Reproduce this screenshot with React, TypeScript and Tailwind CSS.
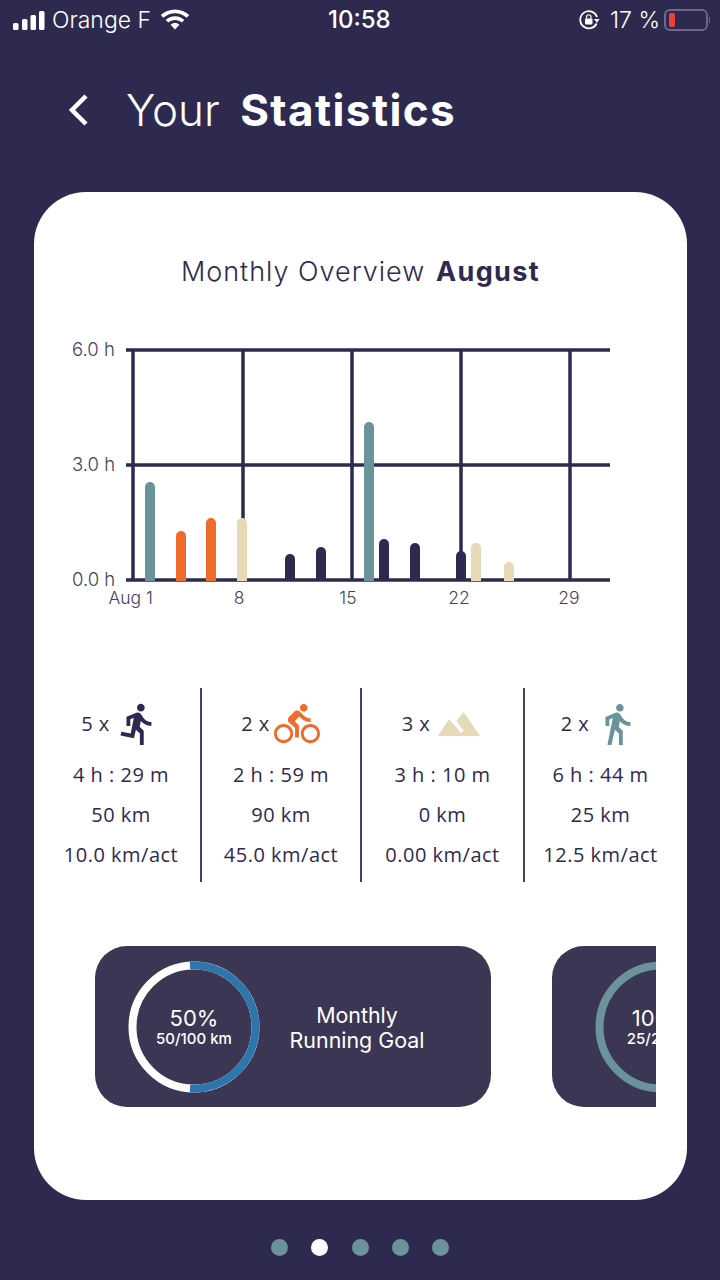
import { MdDirectionsBike, MdDirectionsRun, MdDirectionsWalk } from "react-icons/md";

const navy = "#2e2a4f";
const orange = "#ee6c2b";
const cream = "#e6d9b8";
const teal = "#6a939b";

const bars = [
  { x: 150, top: 482, color: teal },
  { x: 181, top: 531, color: orange },
  { x: 211, top: 518, color: orange },
  { x: 242, top: 518, color: cream },
  { x: 290, top: 554, color: navy },
  { x: 321, top: 547, color: navy },
  { x: 369, top: 422, color: teal },
  { x: 384, top: 539, color: navy },
  { x: 415, top: 543, color: navy },
  { x: 461, top: 551, color: navy },
  { x: 476, top: 543, color: cream },
  { x: 509, top: 562, color: cream },
];

const Mountains = () => (
  <svg width="42" height="24" viewBox="0 0 42 24" fill={cream}>
    <path d="M25.6 0 L42 24 L0 24 L11 7 L23 21 L25.5 18.5 L18.5 9 Z" />
  </svg>
);

const stats = [
  { count: "5 x", icon: <MdDirectionsRun size={46} color={navy} />, time: "4 h : 29 m", km: "50 km", avg: "10.0 km/act", width: "w-[160px]", row: "gap-[5px]" },
  { count: "2 x", icon: <MdDirectionsBike size={46} color={orange} />, time: "2 h : 59 m", km: "90 km", avg: "45.0 km/act", width: "w-[160px]", row: "gap-[4px] pr-[1px]" },
  { count: "3 x", icon: <Mountains />, time: "3 h : 10 m", km: "0 km", avg: "0.00 km/act", width: "w-[163px]", row: "gap-[8px] pr-[3px]" },
  { count: "2 x", icon: <MdDirectionsWalk size={46} color={teal} />, time: "6 h : 44 m", km: "25 km", avg: "12.5 km/act", width: "w-[151px]", row: "gap-[5px]" },
];

const Chart = () => (
  <svg width="653" height="275" viewBox="34 340 653 275" className="block">
    {[350, 465, 580].map((y) => (
      <line key={y} x1="126" x2="610" y1={y} y2={y} stroke={navy} strokeWidth="3.5" />
    ))}
    {[133, 243, 352, 461, 570].map((x) => (
      <line key={x} x1={x} x2={x} y1="350" y2="580" stroke={navy} strokeWidth="3.5" />
    ))}
    {bars.map((b) => (
      <path
        key={b.x}
        d={`M${b.x - 5} 581 V${b.top + 5} a5 5 0 0 1 10 0 V581 Z`}
        fill={b.color}
      />
    ))}
    <g fill="#45425f" fontSize="18.5" fontWeight="300" fontFamily="Inter, sans-serif">
      <text x="72" y="356">6.0 h</text>
      <text x="72" y="471">3.0 h</text>
      <text x="72" y="586">0.0 h</text>
      <text x="108.5" y="604" fontSize="17.5">Aug 1</text>
      <text x="239" y="604" fontSize="17.5" textAnchor="middle">8</text>
      <text x="348" y="604" fontSize="17.5" textAnchor="middle">15</text>
      <text x="459" y="604" fontSize="17.5" textAnchor="middle">22</text>
      <text x="569" y="604" fontSize="17.5" textAnchor="middle">29</text>
    </g>
  </svg>
);

const Ring = ({ color, half }: { color: string; half: boolean }) => (
  <svg width="132" height="132" viewBox="0 0 132 132" className="block">
    <circle cx="66" cy="66" r="61.5" fill="none" stroke={half ? "#ffffff" : color} strokeWidth="8" />
    {half && <path d="M62 4.63 A61.5 61.5 0 1 1 62 127.37" fill="none" stroke={color} strokeWidth="8" />}
  </svg>
);

const GoalCard = ({
  pct,
  sub,
  color,
  half,
  pad,
}: {
  pct: string;
  sub: string;
  color: string;
  half: boolean;
  pad: string;
}) => (
  <div className={`flex h-[161px] w-[396px] shrink-0 items-center rounded-[32px] bg-[#3b3654] text-white ${pad}`}>
    <div className="relative h-[132px] w-[132px] shrink-0">
      <Ring color={color} half={half} />
      <div className="absolute inset-0 flex flex-col items-center justify-center">
        <span className="text-[22px] leading-[24px]">{pct}</span>
        <span className="text-[15px] leading-[17px] font-medium">{sub}</span>
      </div>
    </div>
    <div className="ml-[29px] w-[136px] pt-[2px] text-center text-[21.4px] leading-[25px] whitespace-nowrap">
      Monthly
      <br />
      Running Goal
    </div>
  </div>
);

export default function App() {
  return (
    <div className="flex h-[1280px] w-[720px] flex-col overflow-hidden bg-[#2e2a4f] font-['Inter',sans-serif] text-white">
      {/* status bar */}
      <div className="relative flex h-[40px] items-center justify-between pl-[12px] pr-[10px]">
        <div className="flex items-center">
          <svg width="34" height="20" viewBox="0 0 34 20" fill="#fff">
            <rect x="1" y="13" width="5.5" height="7" rx="1.5" />
            <rect x="10" y="9" width="5.5" height="11" rx="1.5" />
            <rect x="18.5" y="5" width="5.5" height="15" rx="1.5" />
            <rect x="27" y="1" width="5.5" height="19" rx="1.5" />
          </svg>
          <span className="ml-[6px] text-[23px] font-light">Orange F</span>
          <svg width="30" height="22" viewBox="0 0 30 22" className="ml-[9px]" fill="#fff">
            <path d="M15 0.5 C9.5 0.5 4.5 2.6 0.8 6.1 L3.3 8.8 C6.4 5.9 10.5 4.2 15 4.2 C19.5 4.2 23.6 5.9 26.7 8.8 L29.2 6.1 C25.5 2.6 20.5 0.5 15 0.5 Z" />
            <path d="M15 7.3 C11.4 7.3 8.1 8.7 5.7 11 L8.2 13.6 C10 11.9 12.4 10.9 15 10.9 C17.6 10.9 20 11.9 21.8 13.6 L24.3 11 C21.9 8.7 18.6 7.3 15 7.3 Z" />
            <path d="M15 14 C13.3 14 11.8 14.6 10.6 15.7 L15 20.6 L19.4 15.7 C18.2 14.6 16.7 14 15 14 Z" />
          </svg>
        </div>
        <span className="absolute left-[328px] text-[24px] font-medium">10:58</span>
        <div className="flex items-center">
          <svg width="22" height="22" viewBox="0 0 22 22" fill="none">
            <path d="M18.6 14.5 A8.6 8.6 0 1 1 19 8" stroke="#fff" strokeWidth="1.8" />
            <path d="M16 10 L21.5 10 L19 14 Z" fill="#fff" />
            <rect x="7" y="9.5" width="7.5" height="6" rx="1" fill="#fff" />
            <path d="M8.5 9.5 V8 a2.2 2.2 0 0 1 4.5 0 V9.5" stroke="#fff" strokeWidth="1.2" />
          </svg>
          <span className="ml-[10px] text-[23px] font-light">17 %</span>
          <div className="ml-[4px] flex h-[22px] w-[44px] items-center rounded-[6px] border-2 border-[#6d6888] pl-[3px]">
            <div className="h-[14px] w-[6px] rounded-[2px] bg-[#ec3f3c]" />
          </div>
          <div className="ml-[1px] h-[6px] w-[1px] bg-[#6d6888]" />
        </div>
      </div>

      {/* header */}
      <div className="mt-[37px] flex h-[66px] items-center pl-[66px]">
        <svg width="24" height="34" viewBox="0 0 24 34" fill="none">
          <path d="M20 3 L6 17 L20 31" stroke="#fff" strokeWidth="4.5" />
        </svg>
        <h1 className="ml-[36px] text-[44px] font-light whitespace-nowrap">
          Your <span className="ml-[8px] font-bold tracking-[1.4px]">Statistics</span>
        </h1>
      </div>

      {/* main card */}
      <div className="mx-[34px] mt-[49px] flex h-[1008px] w-[653px] flex-col overflow-hidden rounded-[52px] bg-white text-[#2e2a4f]">
        <div className="mt-[60px] text-center text-[27px] leading-[40px] font-light tracking-[1px]">
          Monthly Overview <span className="ml-[2px] font-bold tracking-[1.4px]">August</span>
        </div>
        <div className="mt-[48px]">
          <Chart />
        </div>

        <div className="mt-[73px] flex pl-[8px] font-['Open_Sans',sans-serif] text-[20px] tracking-[0.5px]">
          {stats.map((s, i) => (
            <div
              key={s.avg}
              className={`${s.width} flex h-[194px] flex-col items-center ${i < 3 ? "border-r-2 border-[#45425f]" : ""}`}
            >
              <div className={`flex h-[67px] items-center pt-[5px] ${s.row}`}>
                <span>{s.count}</span>
                {s.icon}
              </div>
              <div className="flex h-[40px] items-center whitespace-nowrap">{s.time}</div>
              <div className="flex h-[40px] items-center whitespace-nowrap">{s.km}</div>
              <div className="flex h-[40px] items-center whitespace-nowrap">{s.avg}</div>
            </div>
          ))}
        </div>

        <div className="mt-[64px] ml-[61px] flex w-[561px] gap-[61px] overflow-hidden">
          <GoalCard pct="50%" sub="50/100 km" color="#2e75ab" half pad="pl-[33px]" />
          <GoalCard pct="100%" sub="25/25 km" color={teal} half={false} pad="pl-[43px]" />
        </div>
      </div>

      {/* pager */}
      <div className="mt-[39px] flex justify-center gap-[23.25px]">
        {[0, 1, 2, 3, 4].map((i) => (
          <div key={i} className={`h-[17px] w-[17px] rounded-full ${i === 1 ? "bg-white" : "bg-[#6a939b]"}`} />
        ))}
      </div>
    </div>
  );
}
